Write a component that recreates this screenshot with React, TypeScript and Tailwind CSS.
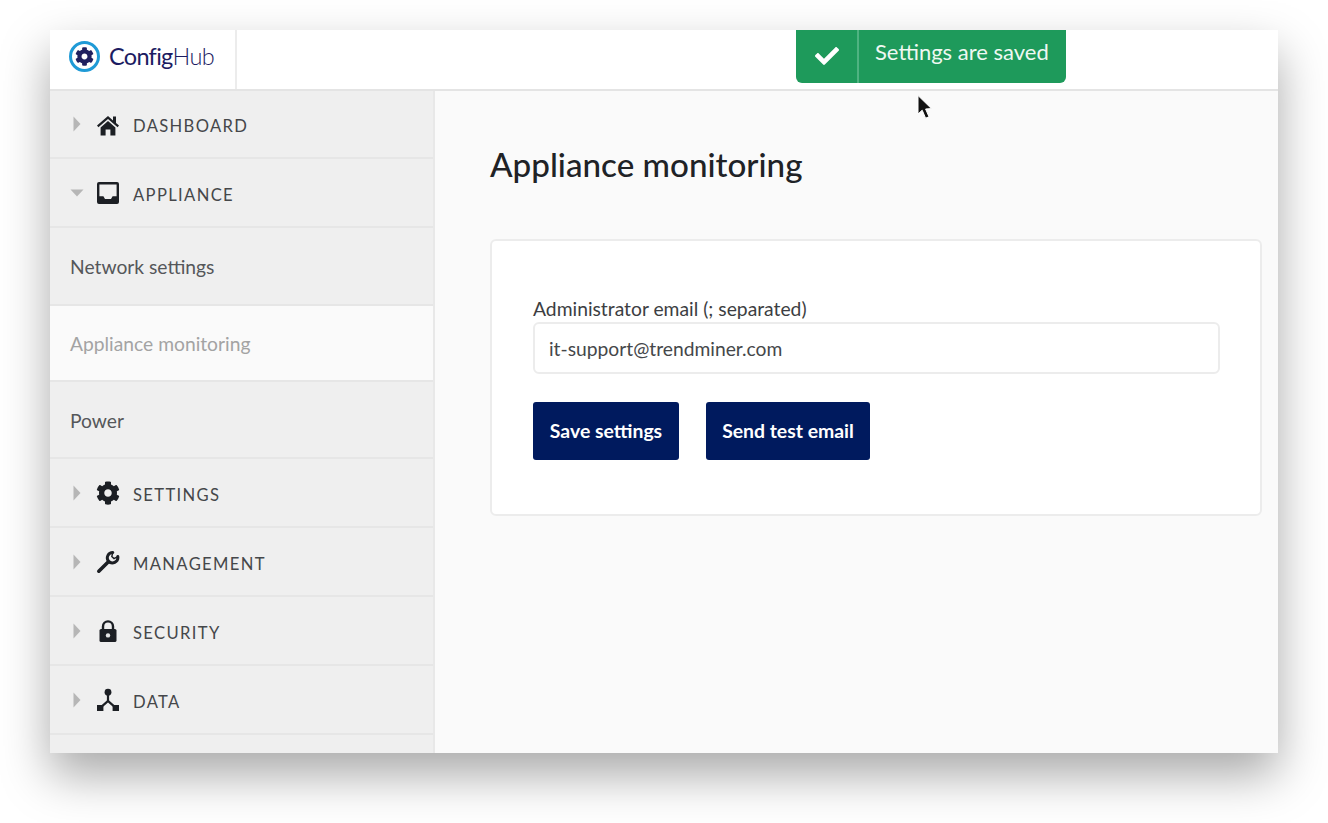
import React from "react";
import { FaCog, FaCheck } from "react-icons/fa";

const HomeIcon = () => (
  <svg width="24" height="24" viewBox="0 0 24 24" fill="#1c1f24">
    <path d="M1 12.6 L12 3 L17 7.4 V3.5 H20 V10 L23 12.6 L21.6 14.2 L12 5.9 L2.4 14.2 Z" />
    <path d="M4.6 14.4 L12 8 L19.4 14.4 V22.6 H14.4 V16.6 H9.6 V22.6 H4.6 Z" />
  </svg>
);

const InboxIcon = () => (
  <svg width="24" height="24" viewBox="0 0 24 24" fill="#1c1f24">
    <path
      fillRule="evenodd"
      d="M3 1 H21 A2 2 0 0 1 23 3 V21 A2 2 0 0 1 21 23 H3 A2 2 0 0 1 1 21 V3 A2 2 0 0 1 3 1 Z M3.4 3.4 V15.2 H7.4 L9 18 H15 L16.6 15.2 H20.6 V3.4 Z"
    />
  </svg>
);

const WrenchIcon = () => (
  <svg width="24" height="24" viewBox="0 0 24 24" fill="none" stroke="#1c1f24" strokeLinecap="round">
    <path d="M2.8 21.2 L12.4 11.8" strokeWidth="3.6" />
    <path d="M16.8 2.4 A5.4 5.4 0 0 0 12.4 11 A5.4 5.4 0 0 0 21.8 6.6" strokeWidth="3" />
    <path d="M16.8 2.4 L15.8 6.6 L18 8.6 L21.8 6.6" strokeWidth="1.4" />
  </svg>
);

const LockIcon = () => (
  <svg width="24" height="24" viewBox="0 0 24 24">
    <path d="M7 11 V7.4 A5 5 0 0 1 17 7.4 V11" fill="none" stroke="#1c1f24" strokeWidth="2.4" />
    <rect x="3.5" y="10" width="17" height="13" rx="1.6" fill="#1c1f24" />
    <circle cx="12" cy="16.4" r="2.2" fill="#e4e4e4" />
  </svg>
);

const DataIcon = () => (
  <svg width="24" height="24" viewBox="0 0 24 24" fill="#1c1f24">
    <circle cx="12" cy="4.2" r="3.4" />
    <rect x="10.9" y="6" width="2.2" height="7" />
    <path d="M12 11.6 L20 18.6 L18.6 20.2 L12 14.4 L5.4 20.2 L4 18.6 Z" />
    <rect x="1" y="17" width="6.4" height="6" />
    <rect x="16.6" y="17" width="6.4" height="6" />
  </svg>
);

const CaretRight = () => (
  <svg width="8" height="16" viewBox="0 0 8 16" fill="#b6b6b6">
    <path d="M0.5 0.5 L7.5 8 L0.5 15.5 Z" />
  </svg>
);

const CaretDown = () => (
  <svg width="14" height="8" viewBox="0 0 14 8" fill="#b6b6b6">
    <path d="M0.5 0.5 H13.5 L7 7.5 Z" />
  </svg>
);

const Section = ({ icon, label, open, h = "h-[69px]" }: { icon: React.ReactNode; label: string; open?: boolean; h?: string }) => (
  <div className={`${h} shrink-0 flex items-center pt-[3px] border-b-2 border-[#e6e6e6] bg-[#efefef]`}>
    <div className={`w-[46px] flex items-center -mt-[3px] ${open ? "pl-[20px]" : "pl-[23px]"}`}>{open ? <CaretDown /> : <CaretRight />}</div>
    <div className="w-[24px] flex items-center justify-center -mt-[2px]">{icon}</div>
    <span className="ml-[13px] pt-[2px] text-[16.6px] tracking-[1.35px] text-[#45474a]">{label}</span>
  </div>
);

const SubItem = ({ label, active, h, pt }: { label: string; active?: boolean; h: string; pt: string }) => (
  <div
    className={`${h} ${pt} shrink-0 flex items-center pl-[20px] border-b-2 border-[#e6e6e6] text-[19.25px] ${
      active ? "bg-[#fafafa] text-[#a3a3a3]" : "bg-[#efefef] text-[#55575a]"
    }`}
  >
    {label}
  </div>
);

export default function App() {
  return (
    <div className="w-[1328px] h-[823px] overflow-hidden bg-white pl-[50px] pt-[30px] font-['Lato','Liberation_Sans',sans-serif]">
      <div className="relative w-[1228px] h-[723px] flex flex-col bg-[#fafafa] shadow-[0_22px_45px_rgba(0,0,0,0.34)]">
        <header className="h-[61px] shrink-0 flex bg-white border-b-2 border-[#e4e4e4]">
          <div className="w-[187px] flex items-center pl-[19px] border-r-2 border-[#ececec]">
            <div className="w-[31px] h-[31px] rounded-full border-[3px] border-[#1f9ad6] flex items-center justify-center -mt-[6px]">
              <FaCog size={19} className="text-[#20205f]" />
            </div>
            <span className="ml-[9px] -mt-[5px] text-[23.5px] tracking-[-0.7px] text-[#1c1c62]">
              Config<span className="font-light">Hub</span>
            </span>
          </div>
        </header>

        <div className="flex-1 flex min-h-0">
          <aside className="w-[385px] shrink-0 overflow-hidden flex flex-col bg-[#efefef] border-r-2 border-[#e8e8e8]">
            <Section icon={<HomeIcon />} label="DASHBOARD" h="h-[68px]" />
            <Section icon={<InboxIcon />} label="APPLIANCE" open />
            <SubItem label="Network settings" h="h-[78px]" pt="pt-[2px]" />
            <SubItem label="Appliance monitoring" active h="h-[76px]" pt="pt-[2px]" />
            <SubItem label="Power" h="h-[77px]" pt="pt-[3px]" />
            <Section icon={<FaCog size={24} color="#1c1f24" />} label="SETTINGS" />
            <Section icon={<WrenchIcon />} label="MANAGEMENT" />
            <Section icon={<LockIcon />} label="SECURITY" />
            <Section icon={<DataIcon />} label="DATA" />
          </aside>

          <main className="flex-1 min-w-0 pl-[55px] pr-[16px] pt-[53px]">
            <h1 className="text-[33.2px] leading-[40px] font-medium text-[#202226]">Appliance monitoring</h1>
            <section className="mt-[55px] h-[277px] rounded-[6px] border-2 border-[#ececec] bg-white pl-[41px] pr-[40px] pt-[56px]">
              <label className="block text-[19.3px] leading-[24px] text-[#3c3e42]">Administrator email (; separated)</label>
              <div className="mt-[1px] h-[52px] flex items-center pt-[3px] rounded-[6px] border-2 border-[#ececec] bg-white pl-[14px] text-[19.25px] text-[#45474a]">
                it-support@trendminer.com
              </div>
              <div className="mt-[28px] flex gap-[27px]">
                <button className="w-[146px] h-[58px] rounded-[3px] bg-[#001a5e] text-white text-[19.4px] font-bold">Save settings</button>
                <button className="w-[164px] h-[58px] rounded-[3px] bg-[#001a5e] text-white text-[19.4px] font-bold">Send test email</button>
              </div>
            </section>
          </main>
        </div>

        <div className="absolute left-[746px] top-0 w-[270px] h-[53px] flex rounded-b-[6px] bg-[#1e9a5b] text-white">
          <div className="w-[63px] flex items-center justify-center border-r-2 border-[#4fb381]">
            <FaCheck size={24} className="-mt-[2px]" />
          </div>
          <div className="flex-1 pl-[16px] pt-[7px] text-[22px] leading-[30px] text-[#eef8f2]">Settings are saved</div>
        </div>

        <svg className="absolute left-[866px] top-[64px]" width="18" height="28" viewBox="0 0 18 28">
          <path d="M2 1.5 L2 20 L6.2 16.2 L9.6 24.2 L13 22.8 L9.6 15 L15.4 14.6 Z" fill="#111" stroke="#fff" strokeWidth="1" />
        </svg>
      </div>
    </div>
  );
}
